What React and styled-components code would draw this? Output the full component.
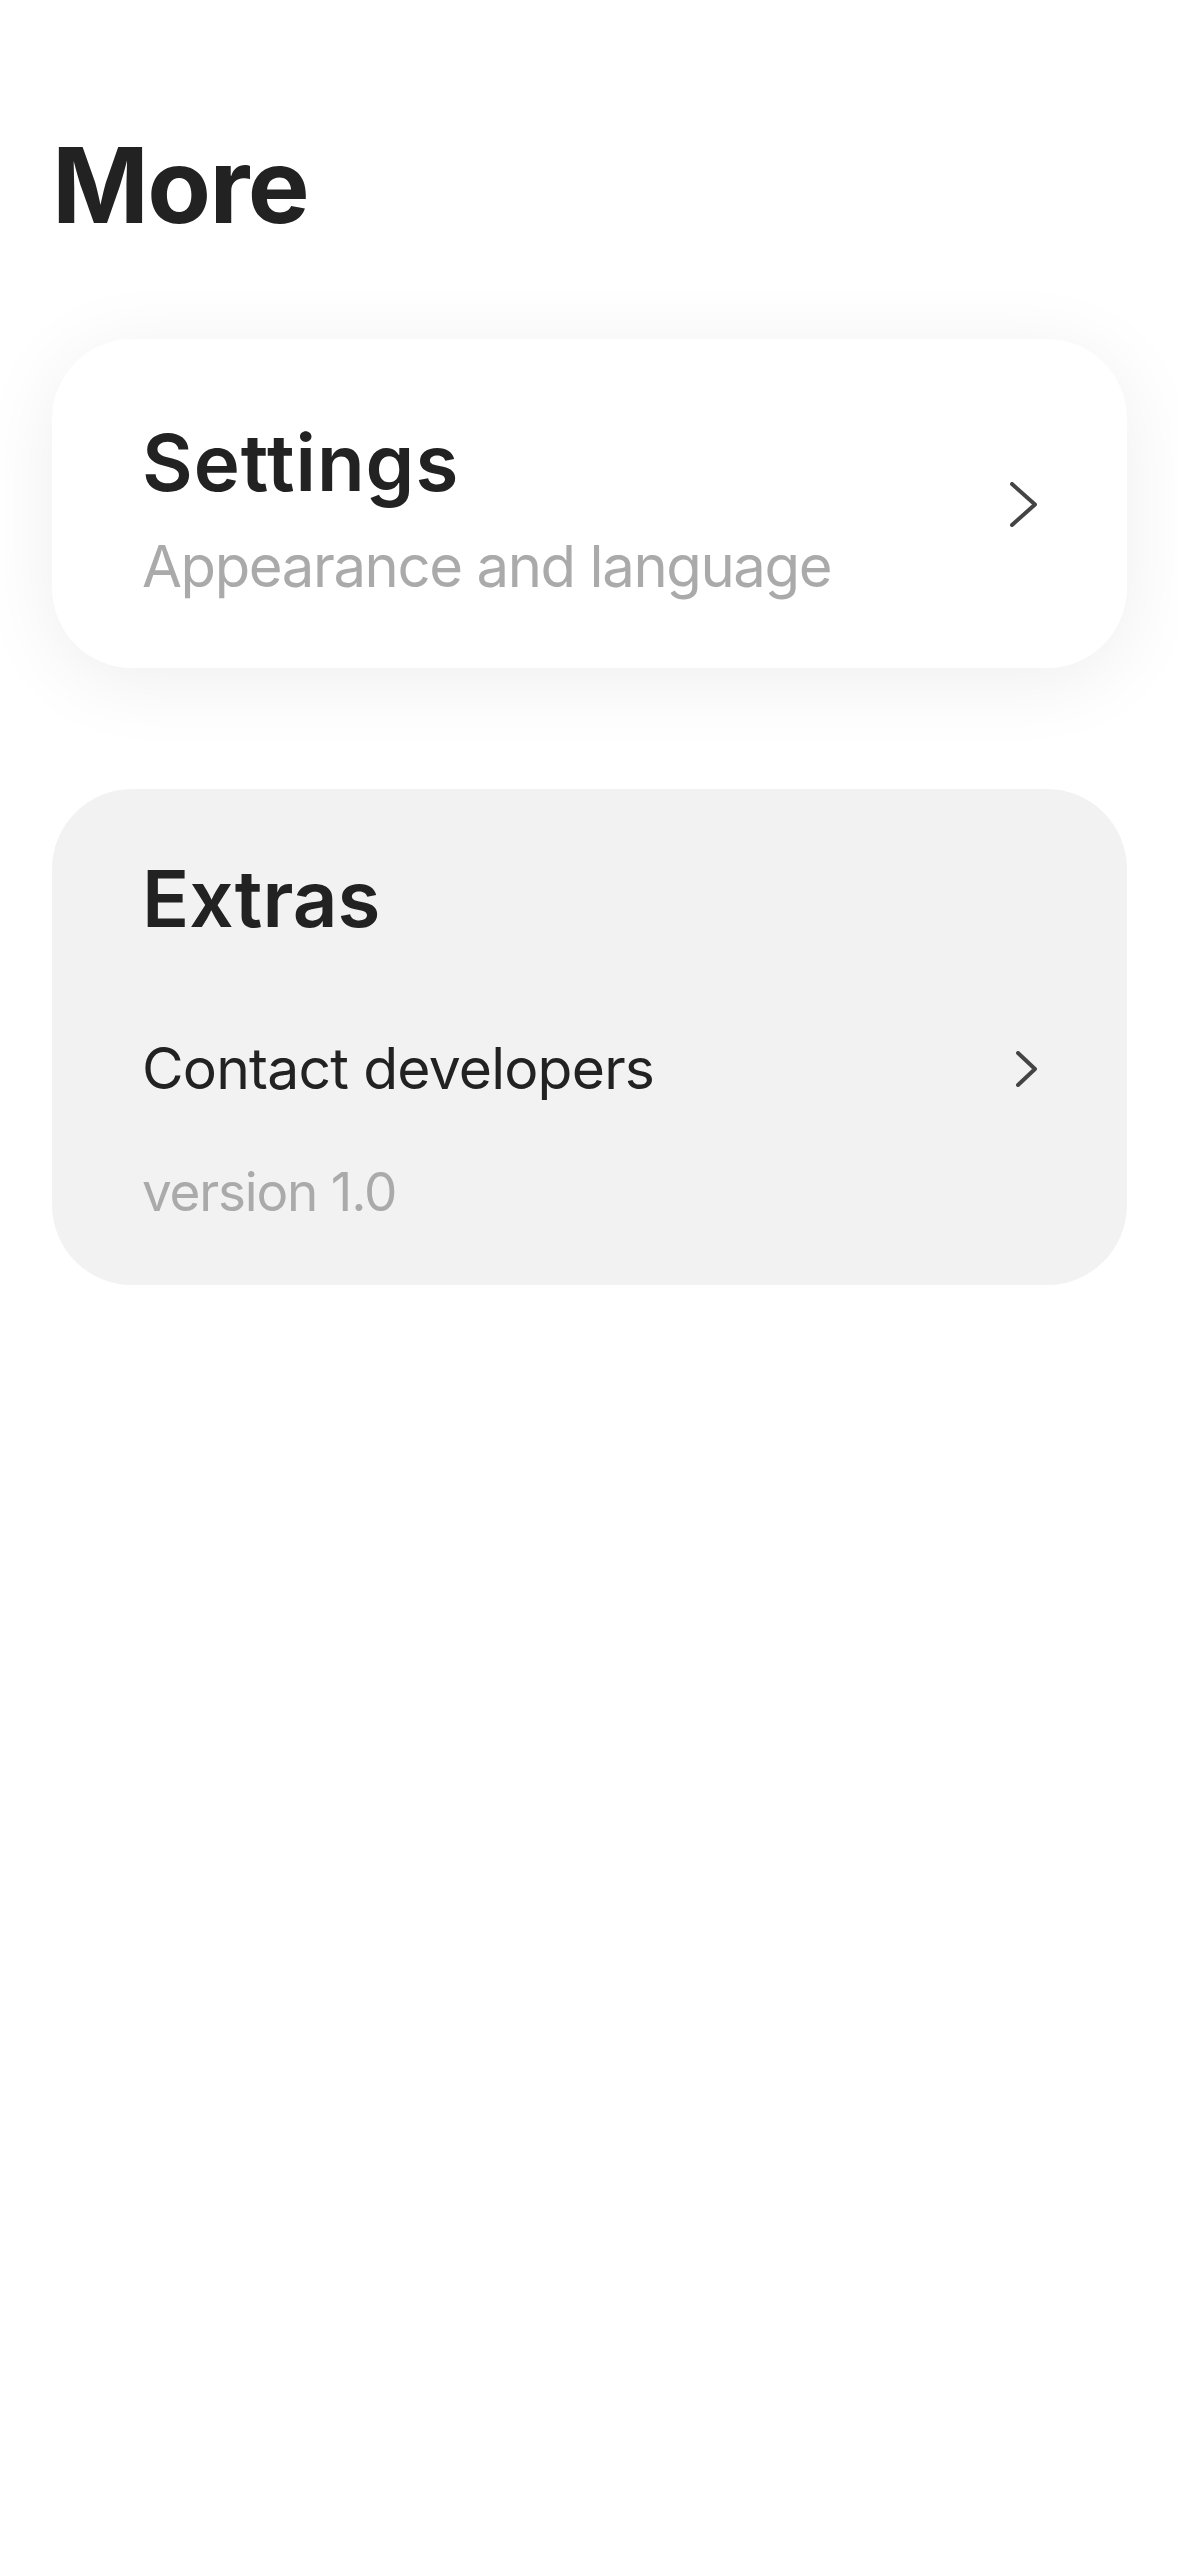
import React from 'react'
import styled, { createGlobalStyle } from 'styled-components';

const GlobalStyle = createGlobalStyle`
    html, body {
        margin: 0;
        padding: 0;
        background: #ffffff;
    }
    body {
        font-family: Inter, "Noto Sans", "Liberation Sans", sans-serif;
        color: #222222;
        -webkit-font-smoothing: antialiased;
    }
`;

const Page = styled.div`
    min-height: 2556px;
    padding: 133px 52px 0;
    box-sizing: border-box;
    display: flex;
    flex-direction: column;
`;

const Title = styled.h1`
    margin: 0 0 102px;
    font-size: 104px;
    line-height: 1;
    font-weight: 700;
    letter-spacing: -1.6px;
`;

const Card = styled.div`
    border-radius: 80px;
    background: ${(p) => (p.muted ? '#f2f2f2' : '#ffffff')};
    box-shadow: ${(p) => (p.muted ? 'none' : '0 12px 80px rgba(0, 0, 0, 0.07)')};
    padding: ${(p) => p.pad};
    margin-bottom: 121px;
    display: flex;
    flex-direction: column;
`;

const Row = styled.div`
    display: flex;
    align-items: center;
    justify-content: space-between;
    margin-top: ${(p) => p.top || 0}px;
`;

const TextStack = styled.div`
    display: flex;
    flex-direction: column;
    gap: ${(p) => p.gap || 0}px;
`;

const Heading = styled.div`
    font-size: 78px;
    line-height: 1;
    font-weight: 600;
    letter-spacing: ${(p) => p.spacing || 0}px;
`;

const Subtitle = styled.div`
    font-size: 58px;
    line-height: 1;
    color: #aaaaaa;
    letter-spacing: -1.4px;
`;

const ItemLabel = styled.div`
    font-size: 57px;
    line-height: 1;
    color: #222222;
    letter-spacing: -0.8px;
`;

const Version = styled.div`
    font-size: 53px;
    line-height: 1;
    color: #aaaaaa;
    letter-spacing: -1.2px;
    margin-top: 69px;
`;

const ChevronBox = styled.svg`
    display: block;
    flex-shrink: 0;
    margin-bottom: ${(p) => p.$lift || 0}px;
`;

function Chevron({ w, h, lift }) {
    return (
        <ChevronBox $lift={lift} width={w + 4} height={h + 4} viewBox={`0 0 ${w + 4} ${h + 4}`} fill="none">
            <path
                d={`M2 2 L${w + 2} ${h / 2 + 2} L2 ${h + 2}`}
                stroke="#444444"
                strokeWidth="4"
                strokeLinecap="round"
                strokeLinejoin="round" />
        </ChevronBox>
    );
}

export default function App() {
    return (
        <>
            <GlobalStyle />
            <Page>
                <Title>More</Title>
                <Card pad="85px 90px 73px">
                    <Row>
                        <TextStack gap={35}>
                            <Heading spacing={1}>Settings</Heading>
                            <Subtitle>Appearance and language</Subtitle>
                        </TextStack>
                        <Chevron w={23} h={41} lift={10} />
                    </Row>
                </Card>
                <Card muted pad="71px 90px 66px">
                    <Heading>Extras</Heading>
                    <Row top={102}>
                        <ItemLabel>Contact developers</ItemLabel>
                        <Chevron w={17} h={32} />
                    </Row>
                    <Version>version 1.0</Version>
                </Card>
            </Page>
        </>
    );
}
